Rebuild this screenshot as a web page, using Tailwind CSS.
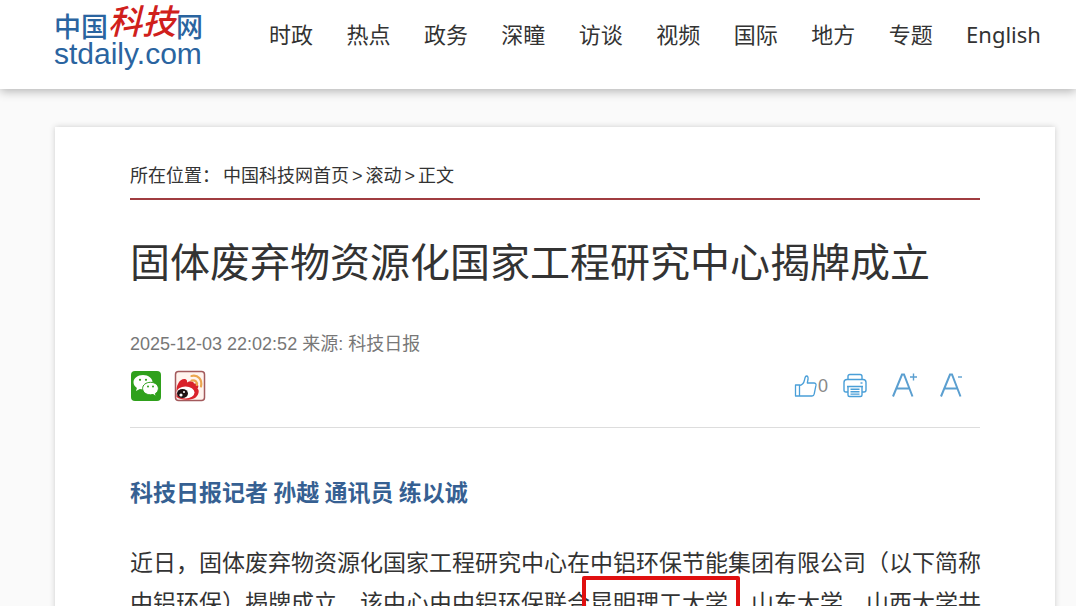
<!DOCTYPE html>
<html lang="zh-CN">
<head>
    <meta charset="UTF-8">
    <meta name="viewport" content="width=device-width, initial-scale=1.0">
    <title>固体废弃物资源化国家工程研究中心揭牌成立</title>
    <script src="https://cdn.jsdelivr.net/npm/@tailwindcss/browser@4"></script>
</head>
<body class="bg-[#fafafa] text-[#333] font-['Liberation_Sans','Noto_Sans_CJK_SC',sans-serif]">
<header class="relative bg-white shadow-[0_2px_10px_rgba(0,0,0,0.3)]">
    <div class="flex items-start h-[89px] pl-[54px] pr-[35px]">
        <a href="#" class="flex flex-col w-[148px] shrink-0 text-[#2a64a0]">
            <span class="flex items-end h-[43px] whitespace-nowrap font-medium text-[27px] leading-[30px]">
                <span>中国</span>
                <span class="text-[34px] leading-[42px] font-medium italic text-[#d0201c]">科技</span>
                <span>网</span>
            </span>
            <span class="text-[30px] leading-[22px]">stdaily.com</span>
        </a>
        <nav class="flex flex-1 justify-between ml-[67px] pt-[18px] text-[22px] leading-[32px] whitespace-nowrap font-['Noto_Sans','Noto_Sans_CJK_SC',sans-serif]">
            <a href="#">时政</a>
            <a href="#">热点</a>
            <a href="#">政务</a>
            <a href="#">深瞳</a>
            <a href="#">访谈</a>
            <a href="#">视频</a>
            <a href="#">国际</a>
            <a href="#">地方</a>
            <a href="#">专题</a>
            <a href="#">English</a>
        </nav>
    </div>
</header>
<main class="mt-[38px] ml-[55px] mr-[21px] px-[75px] pt-[33px] pb-10 bg-white shadow-[0_0_6px_rgba(0,0,0,0.18)]">
    <!-- 面包屑 -->
    <div class="flex gap-[3px] pb-[6px] border-b-2 border-[#a03c40] text-[18px] leading-[32px]">
        <span>所在位置：</span>
        <a href="#">中国科技网首页</a>
        <span>&gt;</span>
        <a href="#">滚动</a>
        <span>&gt;</span>
        <span>正文</span>
    </div>
    <h1 class="pt-[33px] text-[40px] leading-[60px]">固体废弃物资源化国家工程研究中心揭牌成立</h1>
    <p class="pt-[35px] text-[18px] leading-[32px] text-[#777]">2025-12-03 22:02:52 来源: 科技日报</p>
    <!-- 分享与工具 -->
    <div class="flex items-center justify-between pt-[10px] pb-[25px] pr-[14px] border-b border-[#ddd]">
        <div class="flex gap-[12px]">
            <button aria-label="微信">
                <svg width="32" height="32" viewBox="0 0 32 32">
                    <rect x="1" y="1" width="30" height="30" rx="4" fill="#2fa01c"/>
                    <path d="M13 5C7.500 5 3.500 8.300 3.500 12.300c0 2.400 1.300 4.400 3.400 5.700L6 21l3.800-1.900c1 .2 2 .4 3.200.4 5.500 0 9.500-3.200 9.500-7.200S18.500 5 13 5z" fill="#fff"/>
                    <path d="M20.500 12.300c-4.600 0-7.900 2.700-7.900 6.200s3.300 6.300 7.900 6.300c.9 0 1.700-.1 2.500-.3l3.200 1.800-.8-2.800c1.900-1.200 3-2.900 3-5 0-3.500-3.300-6.200-7.900-6.200z" fill="#fff" stroke="#2fa01c"/>
                    <g fill="#2fa01c"><circle cx="10" cy="9.800" r="1.100"/><circle cx="16" cy="9.800" r="1.100"/><circle cx="18" cy="16.500" r="1"/><circle cx="23" cy="16.500" r="1"/></g>
                </svg>
            </button>
            <button aria-label="微博">
                <svg width="32" height="32" viewBox="0 0 32 32">
                    <rect x="1.500" y="1.500" width="29" height="29" rx="3" fill="#fff4ee" stroke="#a35a5c" stroke-width="1.500"/>
                    <path d="M2.500 22c0-3 0-6 2-9 1-2.500 5-5 7.500-3.500 1.500 1 1 2 1 3 3-1.800 6.500-1.500 7 1 4-.5 5.500 2.500 3.500 5 2.500 2 1 7-2.500 9.500-5 2.500-14 2.500-18.500-1z" fill="#d9222b"/>
                    <ellipse cx="11.500" cy="22.500" rx="9" ry="6" fill="#fff"/>
                    <ellipse cx="8.500" cy="23.500" rx="5.500" ry="4.600" fill="#1d1012"/>
                    <circle cx="7" cy="25" r="1.600" fill="#fff"/><circle cx="10" cy="22" r="1" fill="#fff"/>
                    <path d="M17.500 6c6.500-1.500 11 3.500 9.500 10.500M17.500 10.500c4-.8 6 1.500 5.300 4.500" fill="none" stroke="#eba64f" stroke-width="2.200" stroke-linecap="round"/>
                </svg>
            </button>
        </div>
        <div class="flex items-center">
            <button class="flex items-center text-[18px] leading-[24px] text-[#888]">
                <svg width="24" height="24" viewBox="0 0 24 24" fill="none" stroke="#4a9fd8" stroke-width="1.300" stroke-linejoin="round">
                    <path d="M1.500 11h4v11h-4zM5.500 11.500c3-.6 4.500-3 5-5.500.4-2 .6-4 2-4s1.800 1.500 1.500 3.500L13.300 9H20c1.500 0 2.200 1 2 2.200l-1.800 8.800c-.2 1.200-1 2-2.200 2H5.500"/>
                </svg>
                <span>0</span>
            </button>
            <button class="ml-[14px]" aria-label="打印">
                <svg width="26" height="26" viewBox="0 0 26 26" fill="none" stroke="#4a9fd8" stroke-width="1.400" stroke-linejoin="round">
                    <path d="M6 6.500V3.500Q6 1.500 8 1.500h10q2 0 2 2v3M6 19H4Q2 19 2 17v-7.500q0-3 3-3h16q3 0 3 3V17q0 2-2 2h-2"/>
                    <path d="M5 13.500h16M6 13.500V22q0 1.500 1.500 1.500h11q1.500 0 1.500-1.500v-8.500M8.500 16.300h9M8.500 18.700h9M8.500 21.100h9"/>
                    <path d="M18.500 10h2"/>
                </svg>
            </button>
            <button class="ml-[24px]" aria-label="放大字体">
                <svg width="26" height="26" viewBox="0 0 26 26" fill="none" stroke="#5b9fd0" stroke-width="2">
                    <path d="M1 23.500 10 1.500h2l8.500 22M4.500 15.500h13"/>
                    <path d="M18 4h7M21.500 .5v7" stroke-width="1.400"/>
                </svg>
            </button>
            <button class="ml-[22px]" aria-label="缩小字体">
                <svg width="26" height="26" viewBox="0 0 26 26" fill="none" stroke="#5b9fd0" stroke-width="2">
                    <path d="M1 23.500 10 1.500h2l8.500 22M4.500 15.500h13"/>
                    <path d="M18 4h4" stroke-width="1.400"/>
                </svg>
            </button>
        </div>
    </div>
    <article class="-mr-1 pt-[43px] text-[23px] leading-[40px]">
        <p class="font-bold text-[#366092] font-['Noto_Sans_CJK_SC',sans-serif]">科技日报记者 孙越 通讯员 练以诚</p>
        <p class="pt-[32px]">近日，固体废弃物资源化国家工程研究中心在中铝环保节能集团有限公司（以下简称中铝环保）揭牌成立，该中心由中铝环保联合<span class="relative">昆明理工大学<span class="absolute -left-2 -right-3 -top-[14px] h-[60px] border-4 border-[#e01010] rounded-xs"></span></span>、山东大学、山西大学共</p>
    </article>
</main>
</body>
</html>
